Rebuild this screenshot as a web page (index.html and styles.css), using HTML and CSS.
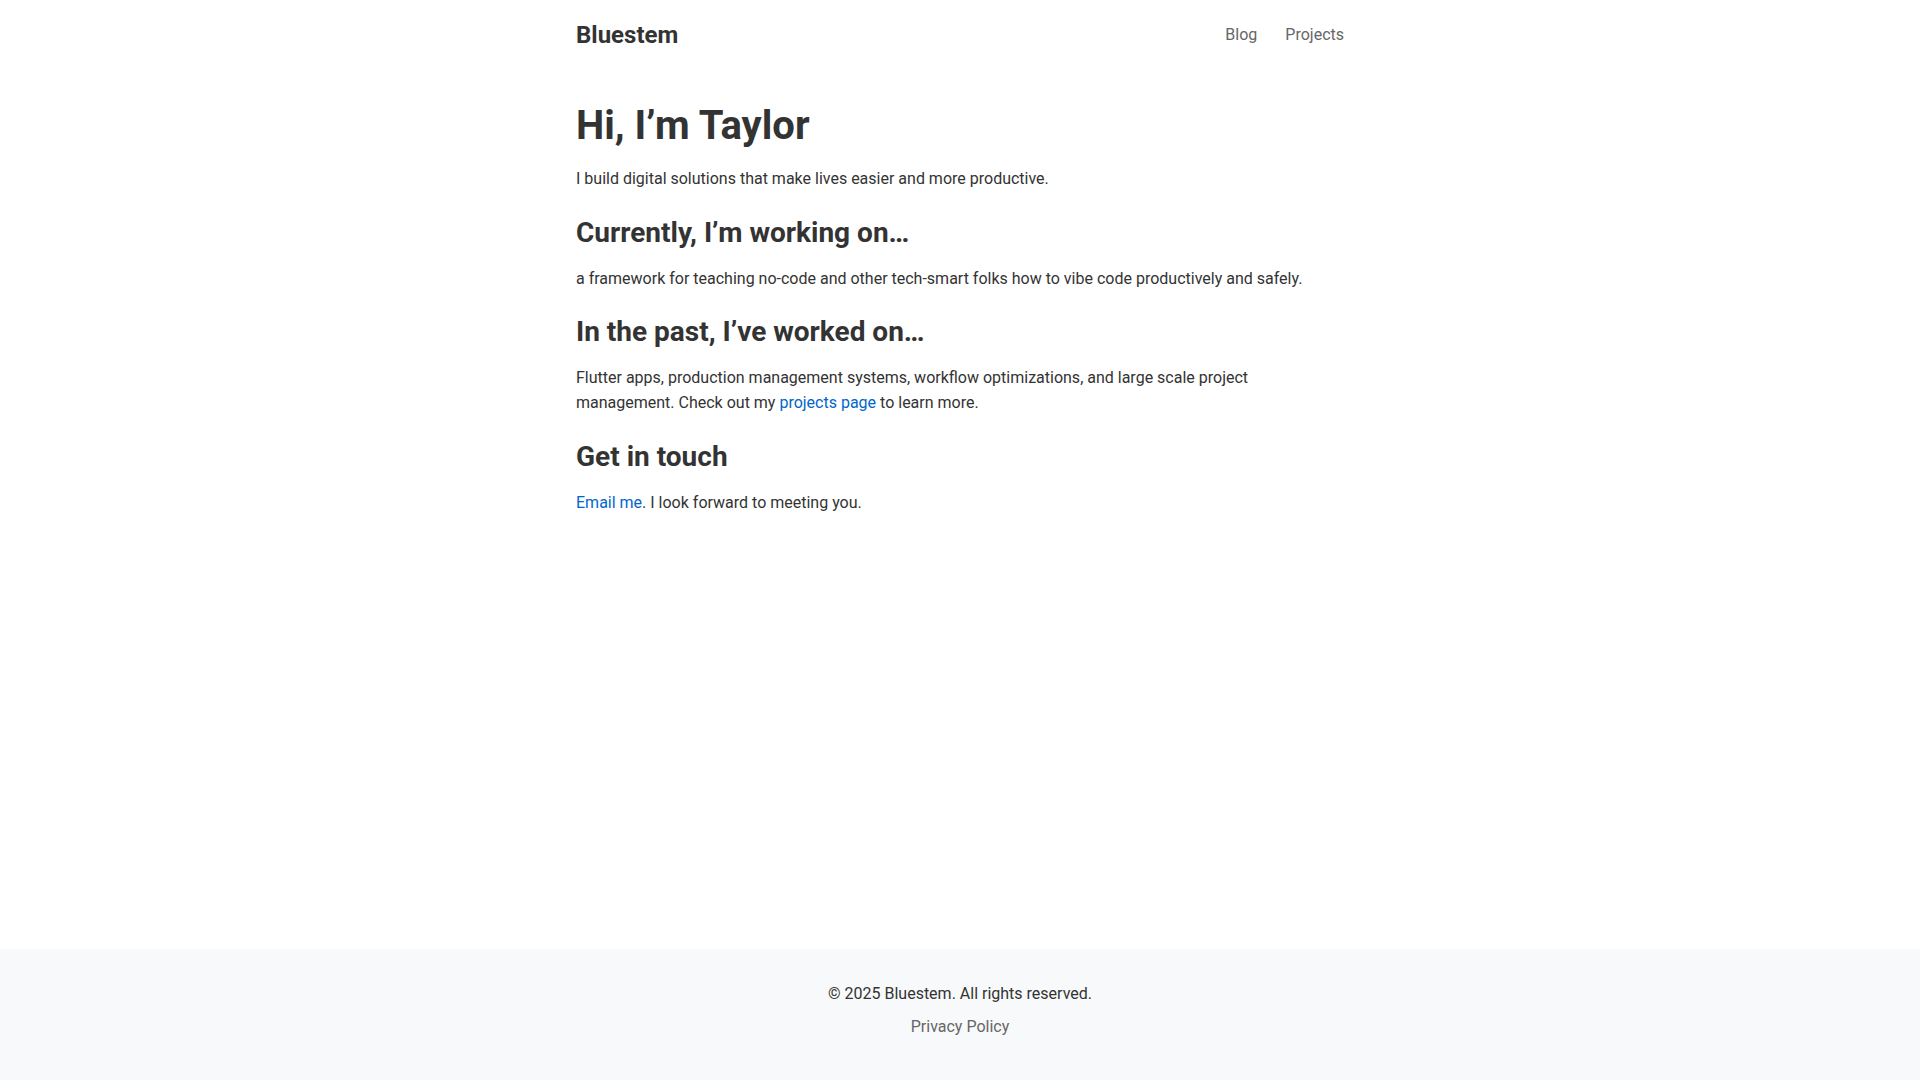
FILE: index.html
```html
<!DOCTYPE html>
<html lang="en">
<head>
<meta charset="utf-8">
<title>Bluestem</title>
<link rel="stylesheet" href="styles.css">
</head>
<body>
<div class="page">
  <header class="site-header">
    <div class="container header-inner">
      <a class="logo" href="#">Bluestem</a>
      <nav class="nav">
        <a href="#">Blog</a>
        <a href="#">Projects</a>
      </nav>
    </div>
  </header>
  <main class="main">
    <div class="container">
      <h1 class="hero-title">Hi, I’m Taylor</h1>
      <p class="section-text">I build digital solutions that make lives easier and more productive.</p>

      <h2 class="section-title">Currently, I’m working on…</h2>
      <p class="section-text">a framework for teaching no-code and other tech-smart folks how to vibe code productively and safely.</p>

      <h2 class="section-title">In the past, I’ve worked on…</h2>
      <p class="section-text">Flutter apps, production management systems, workflow optimizations, and large scale project management. Check out my <a class="link" href="#">projects page</a> to learn more.</p>

      <h2 class="section-title">Get in touch</h2>
      <p class="section-text"><a class="link" href="#">Email me</a>. I look forward to meeting you.</p>
    </div>
  </main>
  <footer class="site-footer">
    <p class="copyright">© 2025 Bluestem. All rights reserved.</p>
    <p class="footer-links"><a href="#">Privacy Policy</a></p>
  </footer>
</div>
</body>
</html>
```

FILE: styles.css
```css
* { box-sizing: border-box; }

html, body {
  margin: 0;
  padding: 0;
}

body {
  font-family: Roboto, "Liberation Sans", Arial, sans-serif;
  font-size: 16px;
  line-height: 1.6;
  color: #333333;
  background: #ffffff;
}

.page {
  min-height: 100vh;
  display: flex;
  flex-direction: column;
}

.container {
  width: 100%;
  max-width: 768px;
  margin: 0 auto;
}

.site-header {
  padding: 16px 0;
}

.header-inner {
  display: flex;
  align-items: center;
  justify-content: space-between;
}

.logo {
  font-size: 24px;
  font-weight: 700;
  color: #333333;
  text-decoration: none;
  line-height: 1.6;
}

.nav {
  display: flex;
  gap: 28px;
}

.nav a {
  color: #666666;
  text-decoration: none;
}

.main {
  flex: 1;
  padding-top: 32px;
}

.hero-title {
  font-size: 40px;
  line-height: 1.2;
  font-weight: 700;
  margin: 0 0 16px;
}

.section-title {
  font-size: 28px;
  line-height: 1.2;
  font-weight: 700;
  margin: 0 0 16px;
}

.section-text {
  margin: 0 0 24px;
}

.link {
  color: #0066cc;
  text-decoration: none;
}

.site-footer {
  background: #f8f9fa;
  text-align: center;
  padding: 32px 0;
}

.site-footer p {
  margin: 0 0 8px;
}

.footer-links a {
  color: #666666;
  text-decoration: none;
}
```
